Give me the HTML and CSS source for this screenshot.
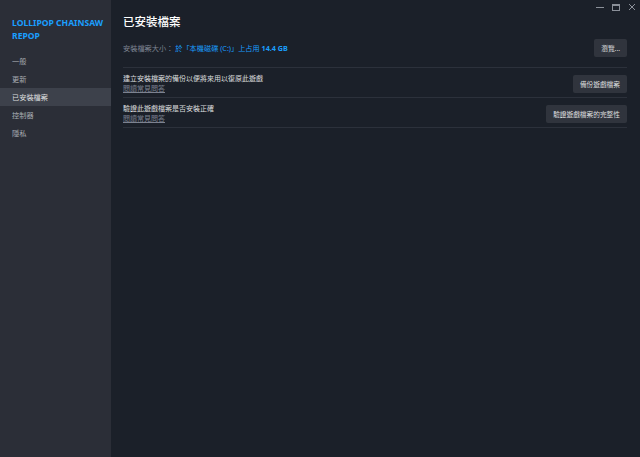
FILE: index.html
```html
<!DOCTYPE html>
<html lang="zh-Hant">
<head>
  <meta charset="UTF-8">
  <meta name="viewport" content="width=device-width, initial-scale=1.0">
  <title>已安裝檔案</title>
  <link rel="stylesheet" href="styles.css">
</head>
<body>
  <div class="window">
    <aside class="sidebar">
      <h1 class="game-title">LOLLIPOP CHAINSAW REPOP</h1>
      <ul class="nav">
        <li>一般</li>
        <li>更新</li>
        <li class="active">已安裝檔案</li>
        <li>控制器</li>
        <li>隱私</li>
      </ul>
    </aside>

    <main class="content">
      <div class="win-controls">
        <svg width="10" height="10" viewBox="0 0 10 10"><path d="M1 5.5h8" stroke="#8b9099" stroke-width="1"/></svg>
        <svg width="10" height="10" viewBox="0 0 10 10"><rect x="1.5" y="2.5" width="7" height="6" fill="none" stroke="#8b9099" stroke-width="1"/><path d="M1.5 3.5h7" stroke="#8b9099"/></svg>
        <svg width="10" height="10" viewBox="0 0 10 10"><path d="M2 2l6 6M8 2l-6 6" stroke="#8b9099" stroke-width="1"/></svg>
      </div>

      <h2 class="page-title">已安裝檔案</h2>

      <div class="size-row">
        <span class="size-text">安裝檔案大小： <span class="blue">於「本機磁碟 (C:)」上占用 <b>14.4 GB</b></span></span>
        <button class="btn">瀏覽...</button>
      </div>

      <div class="row">
        <div class="row-text">
          <div>建立安裝檔案的備份以便將來用以復原此遊戲</div>
          <a class="faq">閱讀常見問答</a>
        </div>
        <button class="btn">備份遊戲檔案</button>
      </div>

      <div class="row">
        <div class="row-text">
          <div>驗證此遊戲檔案是否安裝正確</div>
          <a class="faq">閱讀常見問答</a>
        </div>
        <button class="btn">驗證遊戲檔案的完整性</button>
      </div>
    </main>
  </div>
</body>
</html>
```

FILE: styles.css
```css
* {
  margin: 0px;
  padding: 0px;
  box-sizing: border-box;
}

body {
  background-color: #1b2029;
  font-family: "Noto Sans", "Noto Sans CJK TC", sans-serif;
  color: #dcdedf;
}

.window {
  display: flex;
  width: 640px;
  height: 457px;
}

.sidebar {
  width: 111px;
  background-color: #2b2e37;
  padding-top: 17px;
}

.game-title {
  padding: 0px 4px 0px 12px;
  font-size: 8.6px;
  line-height: 13px;
  font-weight: 700;
  color: #1a9fff;
}

.nav {
  list-style: none;
  margin-top: 9px;
}

.nav li {
  height: 18px;
  line-height: 18px;
  padding-left: 12px;
  font-size: 7.2px;
  color: #a7abb2;
}

.nav li.active {
  background-color: #3d414b;
  color: #dcdedf;
}

.content {
  flex: 1;
  position: relative;
  padding: 14px 13px 0px 12px;
}

.win-controls {
  position: absolute;
  top: 2px;
  right: 3px;
  display: flex;
  gap: 6px;
}

.page-title {
  font-size: 11.5px;
  font-weight: 500;
  line-height: 16px;
  color: #ffffff;
}

.size-row {
  display: flex;
  justify-content: space-between;
  align-items: center;
  margin-top: 9px;
  padding-bottom: 10px;
  border-bottom: 1px solid #2c313b;
}

.size-text {
  font-size: 7.2px;
  color: #7c8290;
}

.blue {
  color: #1a9fff;
}

.blue b {
  font-weight: 700;
}

.btn {
  font-family: inherit;
  font-size: 6.7px;
  color: #dcdedf;
  background-color: #30343d;
  border: none;
  border-radius: 2px;
  height: 18px;
  padding: 0px 7px;
}

.row {
  display: flex;
  justify-content: space-between;
  align-items: center;
  padding: 6px 0px 3px;
  border-bottom: 1px solid #2c313b;
}

.row-text {
  font-size: 7px;
  line-height: 10px;
  color: #dcdedf;
}

.faq {
  display: block;
  color: #7c8290;
  text-decoration: underline;
  font-size: 7px;
}
```
